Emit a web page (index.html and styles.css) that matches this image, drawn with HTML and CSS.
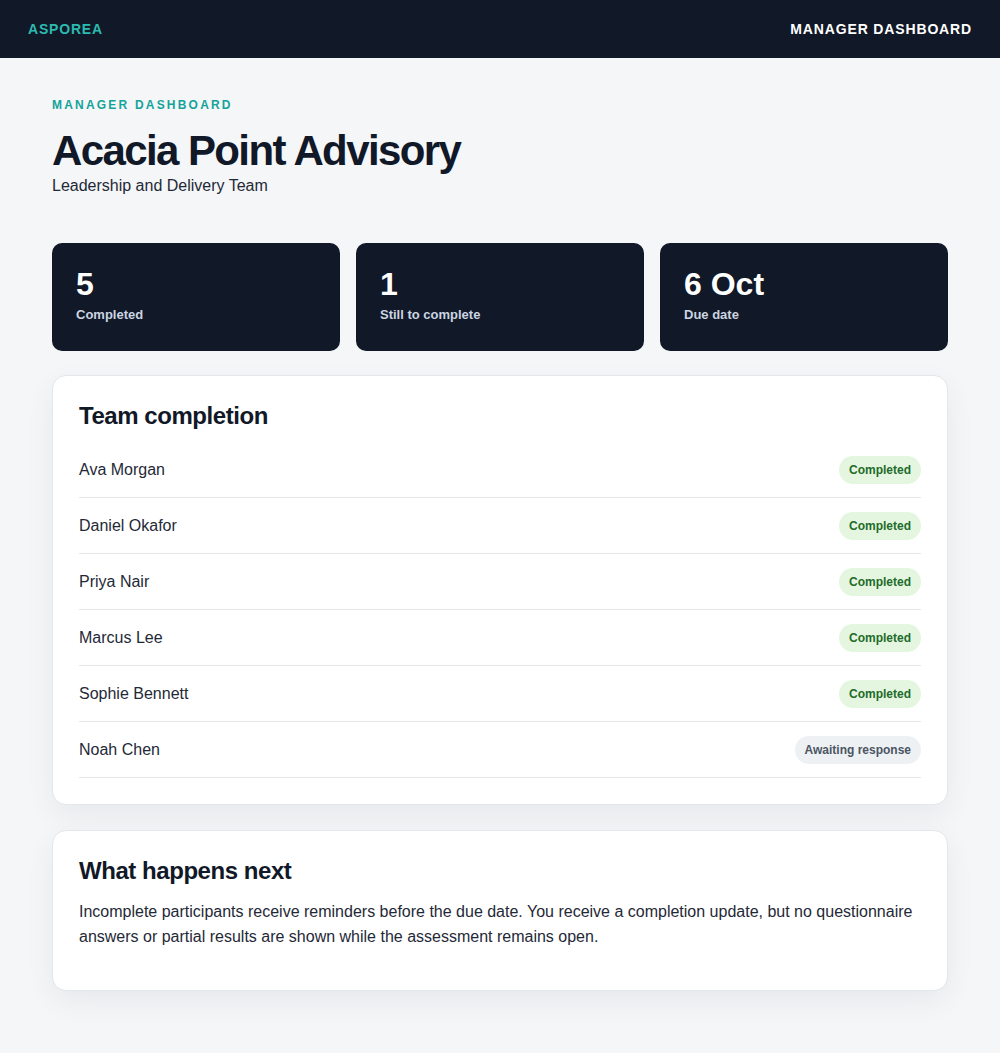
FILE: index.html
```html
<!DOCTYPE html>
<html lang="en">
<head>
<meta charset="utf-8">
<title>Manager Dashboard</title>
<link rel="stylesheet" href="styles.css">
</head>
<body>
<header class="topbar">
  <div class="brand">ASPOREA</div>
  <div class="topbar-title">MANAGER DASHBOARD</div>
</header>
<main class="page">
  <div class="eyebrow">MANAGER DASHBOARD</div>
  <h1 class="org">Acacia Point Advisory</h1>
  <div class="team">Leadership and Delivery Team</div>

  <section class="stats">
    <div class="stat"><div class="stat-value">5</div><div class="stat-label">Completed</div></div>
    <div class="stat"><div class="stat-value">1</div><div class="stat-label">Still to complete</div></div>
    <div class="stat"><div class="stat-value">6 Oct</div><div class="stat-label">Due date</div></div>
  </section>

  <section class="card">
    <h2 class="card-title">Team completion</h2>
    <ul class="rows">
      <li class="row"><span>Ava Morgan</span><span class="badge badge-done">Completed</span></li>
      <li class="row"><span>Daniel Okafor</span><span class="badge badge-done">Completed</span></li>
      <li class="row"><span>Priya Nair</span><span class="badge badge-done">Completed</span></li>
      <li class="row"><span>Marcus Lee</span><span class="badge badge-done">Completed</span></li>
      <li class="row"><span>Sophie Bennett</span><span class="badge badge-done">Completed</span></li>
      <li class="row"><span>Noah Chen</span><span class="badge badge-wait">Awaiting response</span></li>
    </ul>
  </section>

  <section class="card">
    <h2 class="card-title">What happens next</h2>
    <p class="card-text">Incomplete participants receive reminders before the due date. You receive a completion update, but no questionnaire answers or partial results are shown while the assessment remains open.</p>
  </section>
</main>
</body>
</html>
```

FILE: styles.css
```css
* { box-sizing: border-box; }
html, body { margin: 0; padding: 0; }
body {
  background: #f4f6f8;
  font-family: "Liberation Sans", Arial, sans-serif;
  color: #111827;
}
.topbar {
  height: 58px;
  background: #111827;
  display: flex;
  align-items: center;
  justify-content: space-between;
  padding: 0 28px;
}
.brand {
  color: #2bbbb0;
  font-weight: 700;
  font-size: 14px;
  letter-spacing: 0.8px;
}
.topbar-title {
  color: #ffffff;
  font-weight: 700;
  font-size: 14px;
  letter-spacing: 0.85px;
}
.page {
  width: 896px;
  margin: 0 auto;
  padding: 40px 0 60px;
}
.eyebrow {
  color: #14a39a;
  font-size: 12px;
  font-weight: 700;
  letter-spacing: 2.2px;
  line-height: 14px;
}
.org {
  margin: 15px 0 0;
  font-size: 42px;
  line-height: 48px;
  font-weight: 700;
  letter-spacing: -1.6px;
  color: #111827;
}
.team {
  margin-top: 1px;
  font-size: 16px;
  line-height: 20px;
  color: #1f2937;
}
.stats {
  margin-top: 47px;
  display: grid;
  grid-template-columns: repeat(3, 1fr);
  gap: 16px;
}
.stat {
  background: #111827;
  border-radius: 10px;
  height: 108px;
  padding: 24px 24px;
}
.stat-value {
  color: #ffffff;
  font-size: 32px;
  font-weight: 700;
  line-height: 34px;
}
.stat-label {
  margin-top: 6px;
  color: #cbd5e1;
  font-size: 13px;
  font-weight: 700;
  line-height: 16px;
}
.card {
  margin-top: 25px;
  background: #ffffff;
  border: 1px solid #e3e6ea;
  border-radius: 14px;
  box-shadow: 0 10px 30px rgba(17, 24, 39, 0.06);
  padding: 26px 26px;
}
.stats + .card {
  margin-top: 24px;
}
.card-title {
  margin: 0;
  font-size: 24px;
  line-height: 28px;
  font-weight: 700;
  color: #111827;
  letter-spacing: -0.45px;
}
.rows {
  list-style: none;
  margin: 12px 0 0;
  padding: 0;
}
.row {
  height: 56px;
  display: flex;
  align-items: center;
  justify-content: space-between;
  border-bottom: 1px solid #e5e7eb;
  font-size: 16px;
  color: #1f2937;
}
.badge {
  display: inline-flex;
  align-items: center;
  height: 28px;
  padding: 0 10px;
  border-radius: 14px;
  font-size: 12px;
  font-weight: 700;
}
.badge-done {
  background: #e4f6e0;
  color: #1f6b2a;
}
.badge-wait {
  background: #eef1f4;
  color: #4b5563;
}
.card-text {
  margin: 14px 0 15px;
  font-size: 16px;
  line-height: 25px;
  color: #1f2937;
}
```
